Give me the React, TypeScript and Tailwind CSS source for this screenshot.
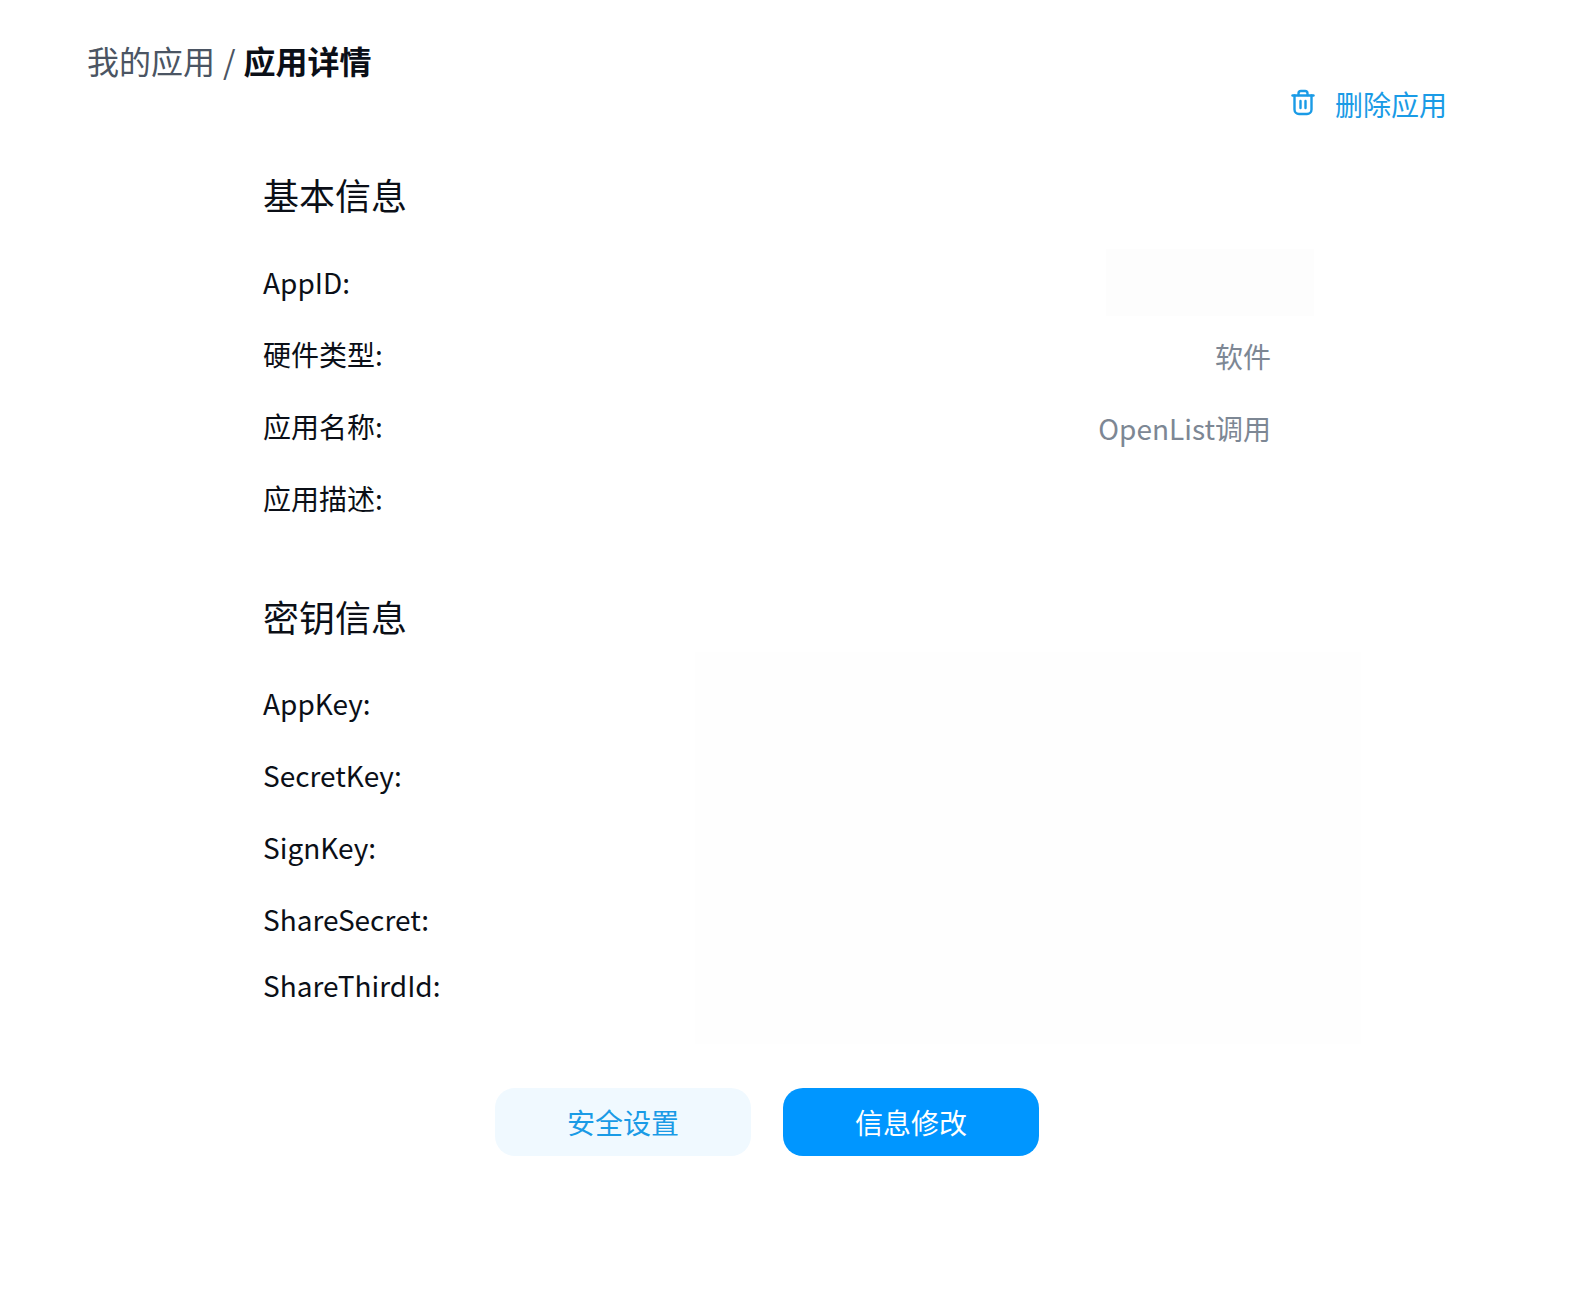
const font = { fontFamily: '"Noto Sans CJK SC", "Noto Sans", sans-serif' };

function Row({ label, value, className = "h-[72px]" }: { label: string; value?: string; className?: string }) {
  return (
    <div className={`flex items-center justify-between ${className}`}>
      <span className="text-[28px] leading-[40px] text-[#0b0f17]">{label}</span>
      {value && <span className="text-[28px] leading-[40px] text-[#7d8794] translate-y-[2px]">{value}</span>}
    </div>
  );
}

export default function App() {
  return (
    <div className="relative min-h-[1289px] bg-white" style={font}>
      <div className="pl-[87px] pr-[124px] pt-[37px]">
        <div className="flex items-center h-[46px] text-[32px] leading-[46px]">
          <span className="text-[#4b5563]">我的应用</span>
          <span className="text-[#4b5563] mx-[8px]">/</span>
          <span className="font-bold text-[#0b0f17]">应用详情</span>
        </div>
        <div className="flex items-center justify-end gap-[18px] h-[40px] mt-[1px]">
          <svg width="28" height="28" viewBox="0 0 28 28" fill="none" stroke="#1a9be6" strokeWidth="2.4" strokeLinecap="round" strokeLinejoin="round" className="mt-[-4px]">
            <path d="M3.500 7.500h21" />
            <path d="M9.500 7V5.500A2.500 2.500 0 0 1 12 3h4a2.500 2.500 0 0 1 2.500 2.500V7" />
            <path d="M5.500 7.500v14A4.500 4.500 0 0 0 10 26h8a4.500 4.500 0 0 0 4.500-4.500v-14" />
            <path d="M11.500 13v7M16.500 13v7" />
          </svg>
          <span className="text-[28px] leading-[40px] text-[#1a9be6]">删除应用</span>
        </div>
      </div>

      <div className="pl-[263px] pr-[300px] mt-[44px]">
        <h2 className="text-[36px] leading-[52px] font-normal text-[#0b0f17] mb-[26px]">基本信息</h2>
        <Row label="AppID:" />
        <Row label="硬件类型:" value="软件" />
        <Row label="应用名称:" value="OpenList调用" />
        <Row label="应用描述:" />

        <h2 className="text-[36px] leading-[52px] font-normal text-[#0b0f17] mt-[56px] mb-[25px]">密钥信息</h2>
        <Row label="AppKey:" />
        <Row label="SecretKey:" />
        <Row label="SignKey:" />
        <Row label="ShareSecret:" />
        <Row label="ShareThirdId:" className="h-[60px]" />
      </div>

      <div className="flex justify-center gap-[32px] mt-[73px] pr-[38px]">
        <button className="w-[256px] h-[68px] pl-[1px] rounded-[20px] bg-[#f0f9ff] text-[28px] text-[#1a9be6]">安全设置</button>
        <button className="w-[256px] h-[68px] pl-[1px] rounded-[20px] bg-[#0096ff] text-[28px] text-white">信息修改</button>
      </div>

      <div className="absolute left-[1106px] top-[249px] w-[208px] h-[67px] bg-[#fdfdfd]" />
      <div className="absolute left-[695px] top-[652px] w-[666px] h-[392px] bg-[#fefefe]" />
    </div>
  );
}
